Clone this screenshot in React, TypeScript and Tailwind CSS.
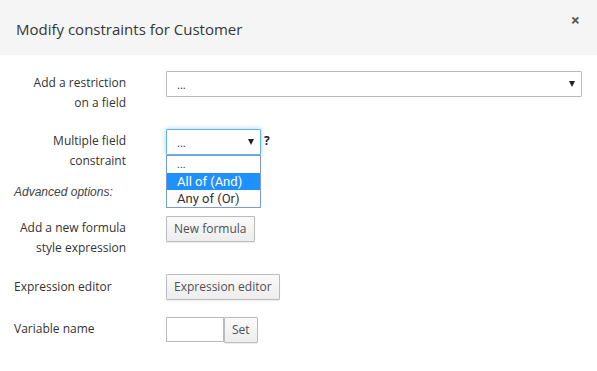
import React from "react";

const font = { fontFamily: '"Open Sans", "Noto Sans", sans-serif' };

function Arrow() {
  return (
    <svg width="6" height="6" viewBox="0 0 6 6" className="absolute right-[6px] top-[9px]">
      <path d="M0 0 L6 0 L3 6 Z" fill="#222" />
    </svg>
  );
}

function Btn({ children, className = "" }: { children: React.ReactNode; className?: string }) {
  return (
    <button
      className={
        "h-[26px] border border-[#bbb] rounded-[1px] bg-gradient-to-b from-[#fafafa] to-[#ededed] px-[7px] text-[12px] text-[#4d5258] leading-[24px] shadow-[0_1px_1px_rgba(0,0,0,0.08)] " +
        className
      }
      style={font}
    >
      {children}
    </button>
  );
}

export default function App() {
  return (
    <div className="w-[597px] h-[371px] bg-white text-[#333] text-[12px]" style={font}>
      <div className="h-[55px] bg-[#f5f5f5] flex items-start justify-between pl-[16px] pr-[17px]">
        <div className="text-[15px] leading-[20px] pt-[19px] text-[#363636]">Modify constraints for Customer</div>
        <div className="pt-[9px] text-[16px] font-bold text-[#555] leading-[22px]">×</div>
      </div>

      <div className="pl-[14px] pr-[15px]">
        {/* Row 1 */}
        <div className="flex mt-[16px]">
          <div className="w-[112px] text-right leading-[20px] pt-[2px]">
            Add a restriction
            <br />
            on a field
          </div>
          <div className="ml-[40px] flex-1">
            <div className="relative h-[26px] border border-[#bbb] rounded-[1px] bg-white pl-[10px] leading-[25px]">
              <span className="text-[11px]">...</span>
              <Arrow />
            </div>
          </div>
        </div>

        {/* Row 2 */}
        <div className="flex mt-[16px]">
          <div className="w-[112px] text-right leading-[20px] pt-[2px]">
            Multiple field
            <br />
            constraint
          </div>
          <div className="ml-[40px] flex items-start">
            <div className="relative w-[95px]">
              <div className="relative h-[26px] border border-[#66afe9] rounded-[1px] bg-white pl-[10px] leading-[25px] shadow-[0_0_5px_rgba(102,175,233,0.6)]">
                <span className="text-[11px]">...</span>
                <Arrow />
              </div>
              <div
                className="absolute left-0 top-[26px] w-[95px] border border-[#7a9cd3] bg-white text-[13px] leading-[17px] text-[#333]"
                style={{ fontFamily: 'Roboto, "Noto Sans", sans-serif' }}
              >
                <div className="pl-[10px] h-[17px] text-[11px]">...</div>
                <div className="pl-[10px] h-[17px] bg-[#1e90ff] text-white">All of (And)</div>
                <div className="pl-[10px] h-[17px]">Any of (Or)</div>
              </div>
            </div>
            <span className="ml-[3px] mt-[2px] font-bold text-[12px] leading-[20px] text-[#222]">?</span>
          </div>
        </div>

        {/* Row 3 */}
        <div
          className="mt-[11px] leading-[20px] italic text-[#444] text-[12px]"
          style={{ fontFamily: '"Liberation Sans", Arial, sans-serif' }}
        >
          Advanced options:
        </div>

        {/* Row 4 */}
        <div className="flex mt-[14px]">
          <div className="w-[112px] text-right leading-[20px] pt-[2px]">
            Add a new formula
            <br />
            style expression
          </div>
          <div className="ml-[40px]">
            <Btn>New formula</Btn>
          </div>
        </div>

        {/* Row 5 */}
        <div className="flex mt-[16px]">
          <div className="w-[112px] leading-[20px] pt-[3px]">Expression editor</div>
          <div className="ml-[40px]">
            <Btn>Expression editor</Btn>
          </div>
        </div>

        {/* Row 6 */}
        <div className="flex mt-[17px]">
          <div className="w-[112px] leading-[20px] pt-[2px]">Variable name</div>
          <div className="ml-[40px] flex">
            <div className="w-[58px] h-[25px] border border-[#bbb] bg-white" />
            <Btn className="px-[7px]">Set</Btn>
          </div>
        </div>
      </div>
    </div>
  );
}
